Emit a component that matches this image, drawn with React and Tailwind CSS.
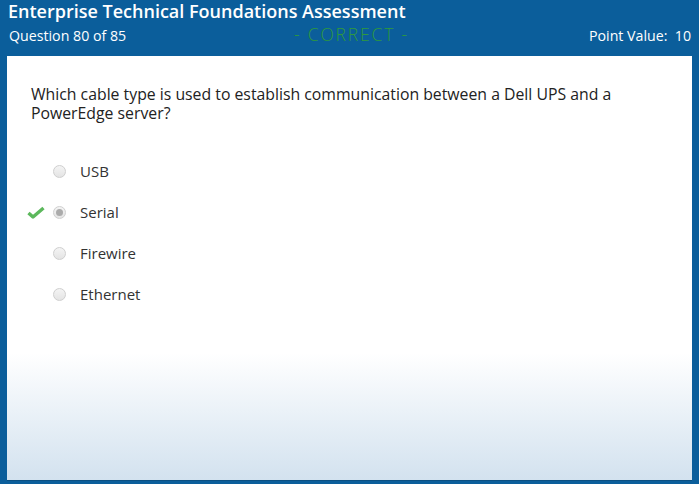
import React from 'react';

const options = ['USB', 'Serial', 'Firewire', 'Ethernet'];

function Radio({ checked }) {
  return (
    <span className="flex h-[13px] w-[13px] items-center justify-center rounded-full border border-[#cfcfcf] bg-gradient-to-b from-[#f4f4f4] to-[#e4e4e4]">
      {checked && <span className="h-[7px] w-[7px] rounded-full bg-[#ababab]" />}
    </span>
  );
}

function Check() {
  return (
    <svg width="18" height="13" viewBox="0 0 18 13">
      <path d="M1.5 7 L6 11 L16.5 2" fill="none" stroke="#5cb85c" strokeWidth="3.4" strokeLinejoin="round" />
    </svg>
  );
}

export default function App() {
  return (
    <div className="flex h-[484px] w-[699px] flex-col bg-[#0b5e9b] font-['Open_Sans',sans-serif]">
      <div className="flex h-[56px] flex-col px-[8px]">
        <h1 className="text-[18px] font-semibold leading-[22px] text-white">
          Enterprise Technical Foundations Assessment
        </h1>
        <div className="relative mt-[4px] flex items-center justify-between text-[14.2px] leading-[20px] text-white">
          <span className="pl-[1px]">Question 80 of 85</span>
          <span className="absolute left-[286px] top-[-2px] text-[17.5px] font-light tracking-[1.8px] text-[#2e9a3c]">- CORRECT -</span>
          <span>Point Value:&nbsp; 10</span>
        </div>
      </div>
      <div className="mx-[7px] mb-[3px] flex-1 border-b border-[#0a4f82] bg-gradient-to-b from-white from-[70%] to-[#d3e2ef]">
        <p className="pl-[24px] pr-[40px] pt-[29px] text-[15.8px] leading-[19px] text-[#222]">
          Which cable type is used to establish communication between a Dell UPS and a PowerEdge server?
        </p>
        <div className="mt-[39px] flex flex-col gap-[23px]">
          {options.map((o) => (
            <div key={o} className="flex h-[18px] items-center">
              <span className="flex w-[46px] justify-end pr-[8px]">{o === 'Serial' && <Check />}</span>
              <Radio checked={o === 'Serial'} />
              <span className="ml-[14px] text-[15px] text-[#333]">{o}</span>
            </div>
          ))}
        </div>
      </div>
    </div>
  );
}
